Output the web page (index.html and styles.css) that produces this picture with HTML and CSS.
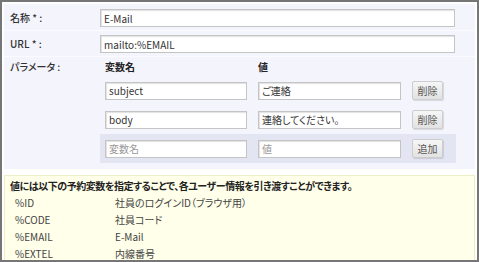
FILE: index.html
```html
<!DOCTYPE html>
<html lang="ja">
<head>
    <meta charset="UTF-8">
    <title>リンク設定</title>
    <link rel="stylesheet" href="styles.css">
</head>
<body>
    <div class="frame">
        <div class="form">
            <div class="row">
                <div class="label">名称 * :</div>
                <div class="field"><input class="text wide" type="text" value="E-Mail"></div>
            </div>
            <div class="row">
                <div class="label">URL * :</div>
                <div class="field"><input class="text wide" type="text" value="mailto:%EMAIL"></div>
            </div>
            <div class="row params">
                <div class="label">パラメータ :</div>
                <div class="field">
                    <div class="param-head">
                        <span class="col-name">変数名</span>
                        <span class="col-value">値</span>
                    </div>
                    <div class="param">
                        <input class="text name" type="text" value="subject">
                        <input class="text value" type="text" value="ご連絡">
                        <button class="btn">削除</button>
                    </div>
                    <div class="param">
                        <input class="text name" type="text" value="body">
                        <input class="text value" type="text" value="連絡してください。">
                        <button class="btn">削除</button>
                    </div>
                    <div class="param add">
                        <input class="text name" type="text" placeholder="変数名">
                        <input class="text value" type="text" placeholder="値">
                        <button class="btn">追加</button>
                    </div>
                </div>
            </div>
        </div>

        <div class="note">
            <p class="note-title">値には以下の予約変数を指定することで、各ユーザー情報を引き渡すことができます。</p>
            <table class="vars">
                <tr><td>%ID</td><td>社員のログインID（ブラウザ用）</td></tr>
                <tr><td>%CODE</td><td>社員コード</td></tr>
                <tr><td>%EMAIL</td><td>E-Mail</td></tr>
                <tr><td>%EXTEL</td><td>内線番号</td></tr>
            </table>
        </div>
    </div>
</body>
</html>
```

FILE: styles.css
```css
html, body {
    margin: 0;
    background-color: #fff;
}

body {
    font-family: "Noto Sans CJK JP", sans-serif;
    font-size: 10px;
    font-feature-settings: "palt";
    color: #333;
}

.frame {
    height: 262px;
    box-sizing: border-box;
    border: 2px solid #767676;
    padding: 2px;
    overflow: hidden;
}

.form {
    background-color: #f4f4fd;
    padding: 1px 0 6px;
}

.row {
    display: flex;
    padding: 4px 0 3px;
    border-bottom: 1px solid #fbfbff;
}

.row.params {
    padding: 0;
    border-bottom: none;
}

.label {
    width: 90px;
    padding-left: 6px;
    line-height: 17px;
    color: #333;
    font-weight: 500;
}

.params .label {
    line-height: 17px;
    padding-top: 1px;
}

.field {
    width: 356px;
}

.text {
    box-sizing: border-box;
    height: 18px;
    margin: 0;
    padding: 0 3px;
    border: 1px solid #c4c4c4;
    box-shadow: inset 1px 1px 1px #e2e2e2;
    background-color: #fff;
    font-family: inherit;
    font-size: 10px;
    font-feature-settings: "palt";
    color: #333;
    outline: none;
}

.text::placeholder {
    color: #999;
}

.text.wide {
    width: 355px;
}

.param-head {
    display: flex;
    height: 19px;
    line-height: 17px;
    padding-top: 1px;
    box-sizing: border-box;
    font-weight: bold;
    color: #222;
}

.col-name {
    width: 153px;
    padding-left: 5px;
}

.param {
    display: flex;
    align-items: center;
    gap: 11px;
    height: 29px;
    padding: 0 5px;
}

.param.add {
    background-color: #e3e6f2;
}

.text.name {
    width: 142px;
}

.text.value {
    width: 143px;
}

.btn {
    width: 31px;
    height: 19px;
    margin: -1px 0 0;
    padding: 0;
    border: 1px solid #cdcdcd;
    border-radius: 2px;
    background: linear-gradient(#f6f6f6, #e2e2e2);
    box-shadow: 1px 1px 1px rgba(0, 0, 0, 0.12);
    font-family: inherit;
    font-size: 10px;
    color: #555;
}

.note {
    margin-top: 6px;
    border: 1px solid #eeeec4;
    background-color: #ffffea;
    padding: 2px 5px 10px;
}

.note-title {
    margin: 0;
    line-height: 15px;
    font-weight: bold;
    color: #222;
    letter-spacing: -0.45px;
}

.vars {
    border-collapse: collapse;
    margin-top: 1px;
    color: #444;
}

.vars td {
    padding: 0;
    height: 17px;
    line-height: 17px;
}

.vars td:first-child {
    width: 100px;
    padding-left: 5px;
}
```
